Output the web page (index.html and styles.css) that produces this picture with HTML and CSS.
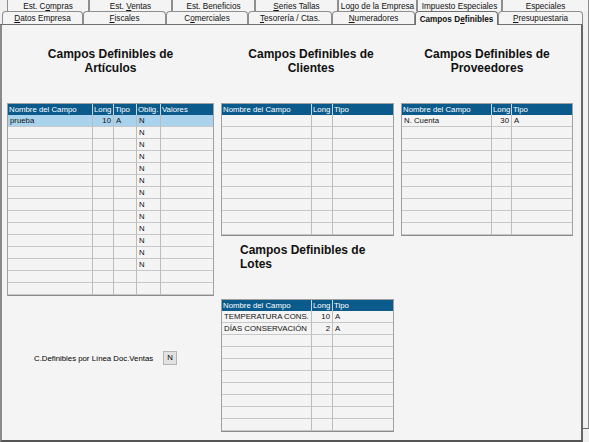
FILE: index.html
```html
<!DOCTYPE html>
<html lang="es">
<head>
<meta charset="utf-8">
<title>Campos Definibles</title>
<link rel="stylesheet" href="styles.css">
</head>
<body>
<div class="tabs-back">
  <div class="tab w82"><span>Est. C<u>o</u>mpras</span></div>
  <div class="tab w83"><span>Est. <u>V</u>entas</span></div>
  <div class="tab w83"><span>Est. Beneficios</span></div>
  <div class="tab w83"><span><u>S</u>eries Tallas</span></div>
  <div class="tab w79"><span>Logo de la Empresa</span></div>
  <div class="tab w85"><span>Impuesto Especiales</span></div>
  <div class="tab w87"><span>Especiales</span></div>
</div>
<div class="main">
  <div class="front">
    <div class="tabs-front">
      <div class="tab w81"><span><u>D</u>atos Empresa</span></div>
      <div class="tab w83"><span><u>F</u>iscales</span></div>
      <div class="tab w82"><span>C<u>o</u>merciales</span></div>
      <div class="tab w84"><span><u>T</u>esorería / Ctas.</span></div>
      <div class="tab w83"><span><u>N</u>umeradores</span></div>
      <div class="tab w83 active"><span>Campos D<u>e</u>finibles</span></div>
      <div class="tab w85"><span><u>P</u>resupuestaria</span></div>
    </div>
    <div class="panel">
      <div class="col c1">
        <div class="h">Campos Definibles de<br>Artículos</div>
        <div class="tbl t5">
          <span class="hd">Nombre del Campo</span><span class="hd">Long</span><span class="hd">Tipo</span><span class="hd">Oblig.</span><span class="hd">Valores</span>
          <span class="sel">prueba</span><span class="sel r">10</span><span class="sel">A</span><span class="sel">N</span><span class="sel"></span>
          <span></span><span></span><span></span><span>N</span><span></span>
          <span></span><span></span><span></span><span>N</span><span></span>
          <span></span><span></span><span></span><span>N</span><span></span>
          <span></span><span></span><span></span><span>N</span><span></span>
          <span></span><span></span><span></span><span>N</span><span></span>
          <span></span><span></span><span></span><span>N</span><span></span>
          <span></span><span></span><span></span><span>N</span><span></span>
          <span></span><span></span><span></span><span>N</span><span></span>
          <span></span><span></span><span></span><span>N</span><span></span>
          <span></span><span></span><span></span><span>N</span><span></span>
          <span></span><span></span><span></span><span>N</span><span></span>
          <span></span><span></span><span></span><span>N</span><span></span>
          <span></span><span></span><span></span><span></span><span></span>
          <span></span><span></span><span></span><span></span><span></span>
        </div>
        <div class="opt">
          <span>C.Definibles por Línea Doc.Ventas</span>
          <span class="box">N</span>
        </div>
      </div>
      <div class="col c2">
        <div class="h shift">Campos Definibles de<br>Clientes</div>
        <div class="tbl t3 tm">
          <span class="hd">Nombre del Campo</span><span class="hd">Long</span><span class="hd">Tipo</span>
          <span></span><span></span><span></span>
          <span></span><span></span><span></span>
          <span></span><span></span><span></span>
          <span></span><span></span><span></span>
          <span></span><span></span><span></span>
          <span></span><span></span><span></span>
          <span></span><span></span><span></span>
          <span></span><span></span><span></span>
          <span></span><span></span><span></span>
          <span></span><span></span><span></span>
        </div>
        <div class="h lotes">Campos Definibles de<br>Lotes</div>
        <div class="tbl t3 tm">
          <span class="hd">Nombre del Campo</span><span class="hd">Long</span><span class="hd">Tipo</span>
          <span>TEMPERATURA CONS.</span><span class="r">10</span><span>A</span>
          <span>DÍAS CONSERVACIÓN</span><span class="r">2</span><span>A</span>
          <span></span><span></span><span></span>
          <span></span><span></span><span></span>
          <span></span><span></span><span></span>
          <span></span><span></span><span></span>
          <span></span><span></span><span></span>
          <span></span><span></span><span></span>
          <span></span><span></span><span></span>
          <span></span><span></span><span></span>
        </div>
      </div>
      <div class="col c3">
        <div class="h">Campos Definibles de<br>Proveedores</div>
        <div class="tbl t3 tp">
          <span class="hd">Nombre del Campo</span><span class="hd">Long</span><span class="hd">Tipo</span>
          <span>N. Cuenta</span><span class="r">30</span><span>A</span>
          <span></span><span></span><span></span>
          <span></span><span></span><span></span>
          <span></span><span></span><span></span>
          <span></span><span></span><span></span>
          <span></span><span></span><span></span>
          <span></span><span></span><span></span>
          <span></span><span></span><span></span>
          <span></span><span></span><span></span>
          <span></span><span></span><span></span>
        </div>
      </div>
    </div>
  </div>
  <div class="back-edge"></div>
</div>
</body>
</html>
```
FILE: styles.css
```css
* { box-sizing: border-box; }

body {
  margin: 0;
  width: 589px;
  height: 442px;
  overflow: hidden;
  background: #f0f0f0;
  font-family: "Liberation Sans", Arial, sans-serif;
  font-size: 7.8px;
  color: #000;
}

u { text-decoration: underline; text-underline-offset: 1px; }

/* tabs */
.tabs-back {
  display: flex;
  height: 11px;
  overflow: hidden;
  padding-left: 7px;
}
.tab {
  display: flex;
  align-items: center;
  justify-content: center;
  white-space: nowrap;
  background: #f4f4f4;
  border: 1px solid #8e8e8e;
  border-bottom: none;
  border-radius: 4px 4px 0 0;
  flex: none;
  font-size: 8.2px;
  color: #111;
}
.tabs-back .tab {
  height: 16px;
  margin-top: -4px;
  padding-top: 4px;
}
.w79 { width: 79px; }
.w81 { width: 81px; }
.w82 { width: 82px; }
.w83 { width: 83px; }
.w84 { width: 84px; }
.w85 { width: 85px; }
.w87 { width: 87px; }

.main {
  display: flex;
  align-items: flex-start;
}
.front { width: 583px; flex: none; }
.tabs-front {
  display: flex;
  align-items: flex-start;
  height: 14px;
  padding-left: 2px;
  border-bottom: 1px solid #707070;
}
.tabs-front .tab {
  height: 13px;
  padding-top: 1px;
}
.tabs-front .tab.active {
  height: 14px;
  margin-bottom: -1px;
  position: relative;
  font-weight: bold;
  background: #f4f4f4;
  border-color: #6e6e6e;
}

.back-edge {
  width: 6px;
  height: 418px;
  flex: none;
  border-right: 1px solid #8a8a8a;
  border-bottom: 1px solid #666;
}

/* panel */
.panel {
  height: 417px;
  background: #f4f4f4;
  border-left: 2px solid #8a8a8a;
  border-right: 2px solid #666;
  border-bottom: 2px solid #555;
  display: flex;
  align-items: flex-start;
  gap: 7px;
  padding-left: 5px;
}
.col { display: flex; flex-direction: column; flex: none; }
.c1 { width: 207px; }
.c2 { width: 173px; }
.c3 { width: 172px; }

.h {
  font-size: 12px;
  font-weight: bold;
  line-height: 14px;
  height: 28px;
  margin: 22px 0 28px;
  text-align: center;
  color: #111;
}
.h.shift { padding-left: 7px; }
.h.lotes {
  text-align: left;
  padding-left: 19px;
  margin: 7px 0 28px;
}

/* grids */
.tbl {
  display: grid;
  grid-template-rows: 11px;
  grid-auto-rows: 12px;
  border: 1px solid #a0a0a0;
  border-bottom-color: #8c8c8c;
  background: #f4f4f4;
}
.tbl > span {
  border-right: 1px solid #bcbcbc;
  border-bottom: 1px solid #c8c8c8;
  padding: 0 0 0 2px;
  line-height: 11px;
  white-space: nowrap;
  overflow: hidden;
  color: #111;
}
.tbl > span.hd {
  background: #0a5a8c;
  color: #fff;
  border-bottom: none;
  border-right-color: #c9d6e0;
  line-height: 11px;
  padding-left: 1px;
}
.tbl > span.sel { background: #a9d3ec; }
.tbl > span.r { text-align: right; padding: 0 2px 0 0; }

.t5 { grid-template-columns: 85px 21px 23px 24px 52px; }
.t5 > span:nth-child(5n) { border-right: none; }
.tm { grid-template-columns: 90px 21px 60px; }
.tp { grid-template-columns: 90px 20px 60px; }
.t3 > span:nth-child(3n) { border-right: none; }

/* option */
.opt {
  display: flex;
  align-items: center;
  gap: 10px;
  margin-top: 55px;
  padding-left: 27px;
  height: 14px;
}
.box {
  width: 14px;
  height: 14px;
  background: #e2e2e2;
  border: 1px solid #b5b5b5;
  padding-left: 3px;
  line-height: 12px;
}
```
